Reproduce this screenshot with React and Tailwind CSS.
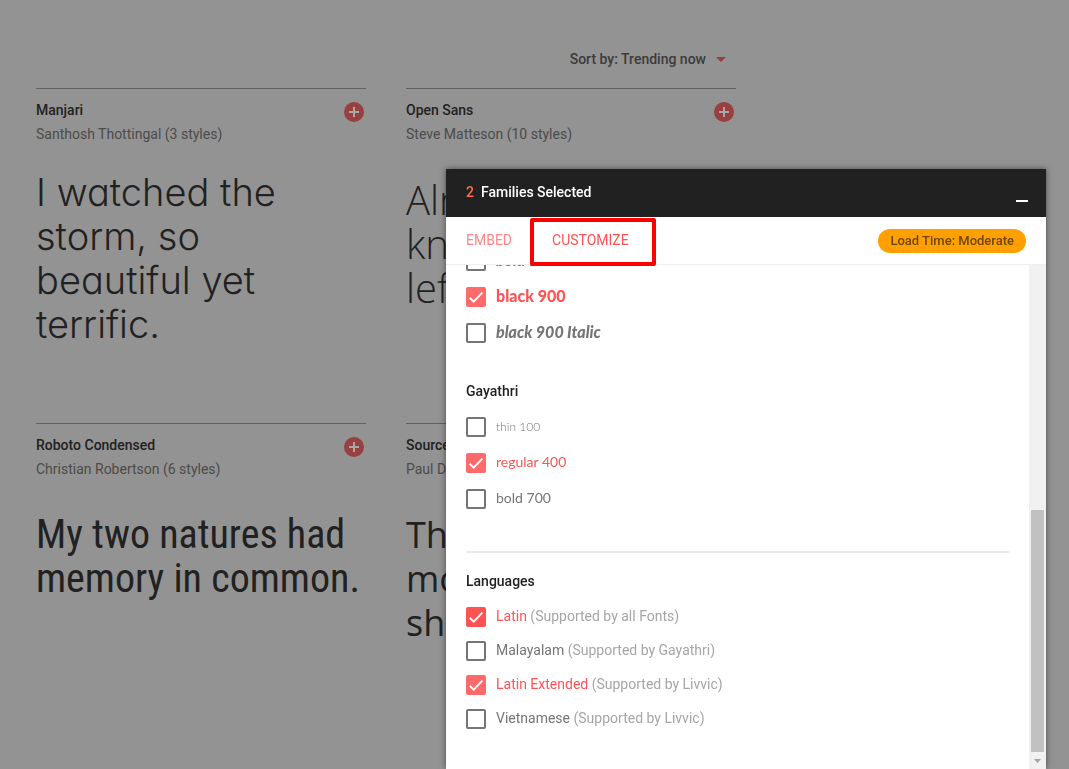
import { useState } from 'react';

const FONTS = [
  {
    name: 'Manjari',
    author: 'Santhosh Thottingal (3 styles)',
    sample: 'I watched the storm, so beautiful yet terrific.',
    sampleClass: "mt-6 w-[260px] font-['Inter',sans-serif] font-light text-[38px] [font-feature-settings:'cv11']",
  },
  {
    name: 'Open Sans',
    author: 'Steve Matteson (10 styles)',
    sample: 'Almost before we knew it, we had left the ground.',
    sampleClass: "mt-8 font-['Open_Sans',sans-serif] font-light text-[40px]",
  },
  {
    name: 'Roboto Condensed',
    author: 'Christian Robertson (6 styles)',
    sample: 'My two natures had memory in common.',
    sampleClass: "mt-8 font-['Roboto_Condensed',sans-serif] text-[40px]",
  },
  {
    name: 'Source Sans Pro',
    author: 'Paul D. Hunt (12 styles)',
    sample: 'The face of the moon was in shadow.',
    sampleClass: "mt-8 w-[280px] font-['Open_Sans',sans-serif] text-[36px]",
  },
];

const LIVVIC = [
  { id: 'livvic-700i', label: 'bold 700 Italic', textClass: "pb-[2px] font-['Lato',sans-serif] text-base font-bold italic" },
  { id: 'livvic-900', label: 'black 900', textClass: "pb-[2px] font-['Lato',sans-serif] text-base font-black" },
  { id: 'livvic-900i', label: 'black 900 Italic', textClass: "pb-[2px] font-['Lato',sans-serif] text-base font-black italic" },
];

const GAYATHRI = [
  { id: 'gayathri-100', label: 'thin 100', textClass: "font-['Lato',sans-serif] text-xs font-light" },
  { id: 'gayathri-400', label: 'regular 400', textClass: "pb-[2px] font-['Lato',sans-serif] text-sm" },
  { id: 'gayathri-700', label: 'bold 700', textClass: "pb-[2px] font-['Lato',sans-serif] text-sm" },
];

const LANGUAGES = [
  { id: 'latin', label: 'Latin', note: '(Supported by all Fonts)' },
  { id: 'malayalam', label: 'Malayalam', note: '(Supported by Gayathri)' },
  { id: 'latin-ext', label: 'Latin Extended', note: '(Supported by Livvic)' },
  { id: 'vietnamese', label: 'Vietnamese', note: '(Supported by Livvic)' },
];

function FontCard({ font }) {
  return (
    <article className="h-[335px] border-t border-[#616161] pt-[9px]">
      <div className="flex justify-between items-start pr-[2px]">
        <div className="text-sm leading-6">
          <h2 className="font-medium text-[#212121]">{font.name}</h2>
          <p className="text-[#4b4b4b]">{font.author}</p>
        </div>
        <button
          type="button"
          aria-label={`Add ${font.name}`}
          className="mt-1 flex size-5 items-center justify-center rounded-full bg-[#983f3f]"
        >
          <svg viewBox="0 0 10 10" className="size-[10px]" stroke="#a8a8a8" strokeWidth="2">
            <path d="M5 0v10M0 5h10" />
          </svg>
        </button>
      </div>
      <p className={`leading-[44px] text-[#212121] ${font.sampleClass}`}>{font.sample}</p>
    </article>
  );
}

function CheckRow({ item, checked, onToggle, rowClass }) {
  return (
    <li className={`flex items-center gap-[10px] ${rowClass}`}>
      <span className="grid size-5">
        <input
          id={item.id}
          type="checkbox"
          checked={checked}
          onChange={() => onToggle(item.id)}
          className={`col-start-1 row-start-1 size-5 appearance-none rounded-[2px] cursor-pointer
            ${item.id === 'latin' ? 'checked:bg-[#ff5252]' : 'checked:bg-[#ff6b6b]'}
            ${checked ? '' : 'border-2 border-[#757575] bg-white'}`}
        />
        {checked && (
          <svg viewBox="0 0 20 20" className="pointer-events-none col-start-1 row-start-1 size-5" fill="none" stroke="#fff" strokeWidth="2">
            <path d="M3.7 10.7l4 3.9L16.4 5.6" />
          </svg>
        )}
      </span>
      <label
        htmlFor={item.id}
        className={`leading-5 cursor-pointer ${checked ? 'text-[#ff5252]' : 'text-[#757575]'} ${item.textClass ?? 'pb-[2px] text-sm'}`}
      >
        {item.label}
        {item.note && <span className="text-[#a6a6a6]"> {item.note}</span>}
      </label>
    </li>
  );
}

export default function App() {
  const [selected, setSelected] = useState(new Set(['livvic-900', 'gayathri-400', 'latin', 'latin-ext']));

  const toggle = (id) => {
    const next = new Set(selected);
    next.has(id) ? next.delete(id) : next.add(id);
    setSelected(next);
  };

  const rows = (items, rowClass) =>
    items.map(item => (
      <CheckRow key={item.id} item={item} checked={selected.has(item.id)} onToggle={toggle} rowClass={rowClass} />
    ));

  return (
    <div className="h-screen overflow-hidden bg-[#939393] font-['Roboto',sans-serif]">
      <main className="grid grid-cols-[repeat(auto-fill,330px)] gap-x-10 px-9 pt-[47px]">
        <div className="col-span-full flex h-[41px] items-start justify-end pr-[10px]">
          <button type="button" className="flex items-center gap-[10px] text-sm leading-6 font-medium text-[#3b3b3b]">
            Sort by: Trending now
            <svg viewBox="0 0 10 5" className="w-[10px] h-[5px]" fill="#983f3f">
              <path d="M0 0h10L5 5z" />
            </svg>
          </button>
        </div>
        {FONTS.map(font => <FontCard key={font.name} font={font} />)}
      </main>

      {/* selection drawer */}
      <section className="fixed right-[23px] bottom-0 flex h-[600px] w-[600px] max-w-full flex-col bg-white shadow-[0_0_6px_rgba(0,0,0,0.5)]">
        <header className="flex h-12 shrink-0 items-center justify-between bg-[#212121] pr-4 pb-[2px] pl-5 text-sm font-medium text-white">
          <h1 className="flex gap-[7px]">
            <span className="text-[#ff7043]">2</span>
            Families Selected
          </h1>
          <button type="button" aria-label="Minimize" className="flex h-6 w-4 items-end justify-center pb-[2px]">
            <span className="h-[2px] w-3 bg-white" />
          </button>
        </header>

        <nav className="flex h-12 shrink-0 items-center justify-between border-b border-[#eeeeee] px-5 text-sm">
          <div className="flex gap-10 pb-[2px]">
            <button type="button" className="text-[#ff8686]">EMBED</button>
            <button type="button" className="relative text-[#ff5252]">
              CUSTOMIZE
              <span className="absolute -top-3 -right-[27px] -bottom-4 -left-[22px] z-10 rounded-[2px] border-4 border-[#ff0000]" />
            </button>
          </div>
          <span className="rounded-full bg-[#ffa000] px-3 text-[13px] leading-6 font-medium text-[#6d4505]">
            Load Time: Moderate
          </span>
        </nav>

        <div className="flex min-h-0 grow">
          <div className="flex grow flex-col justify-end overflow-hidden px-5 pb-[33px]">
            <ul className="shrink-0">{rows(LIVVIC, 'h-9')}</ul>

            <h2 className="mt-7 text-sm leading-6 font-medium text-[#212121]">Gayathri</h2>
            <ul className="mt-[6px] shrink-0">{rows(GAYATHRI, 'h-9')}</ul>

            <hr className="mt-[34px] shrink-0 border-t-2 border-[#ebebeb]" />

            <h2 className="mt-4 text-sm leading-6 font-medium text-[#212121]">Languages</h2>
            <ul className="mt-[7px] shrink-0">{rows(LANGUAGES, 'h-[34px]')}</ul>
          </div>

          <div className="flex w-[17px] shrink-0 flex-col items-center justify-end bg-[#f1f1f1]">
            <div className="h-[48%] w-[13px] bg-[#c1c1c1]" />
            <div className="flex h-[17px] items-center">
              <svg viewBox="0 0 7 4" className="w-[7px] h-1" fill="#a3a3a3">
                <path d="M0 0h7L3.5 4z" />
              </svg>
            </div>
          </div>
        </div>
      </section>
    </div>
  );
}
